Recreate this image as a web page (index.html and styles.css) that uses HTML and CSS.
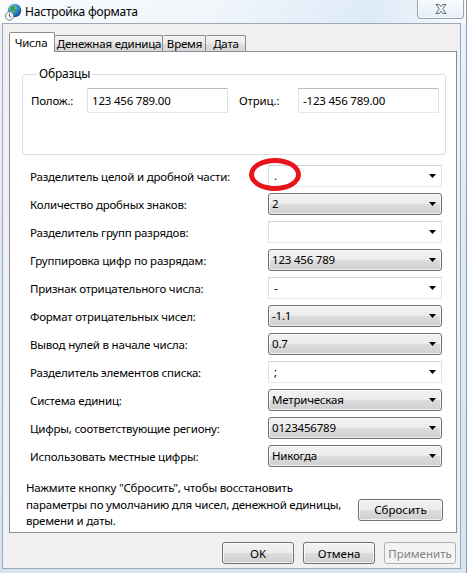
FILE: index.html
```html
<!DOCTYPE html>
<html lang="ru">
<head>
<meta charset="utf-8">
<title>Настройка формата</title>
<link rel="stylesheet" href="styles.css">
</head>
<body>
<div class="window">
  <div class="titlebar">
    <svg class="app-icon" width="18" height="18" viewBox="0 0 18 18">
      <defs>
        <radialGradient id="sea" cx="0.35" cy="0.3" r="0.75">
          <stop offset="0" stop-color="#a9dcff"/>
          <stop offset="0.55" stop-color="#2f86d6"/>
          <stop offset="1" stop-color="#0c4a96"/>
        </radialGradient>
      </defs>
      <circle cx="10.5" cy="7.5" r="6.8" fill="url(#sea)"/>
      <path d="M7 3.2c1.6-.9 3.4-.6 4.1.5.5.9-.6 1.4-.2 2.4.4 1 1.7.8 1.8 2 .1 1-1 1.6-1.9 1.3-1-.3-1.2-1.5-2.2-1.7-.9-.2-1.9.4-2.4-.3-.5-.8.6-1.5.2-2.4C6.2 4.5 6.1 3.7 7 3.2z" fill="#3aa33a"/>
      <path d="M13.6 3.4c1 .5 2 1.8 2.1 3-.6.2-1.3-.4-1.6-1.1-.3-.6-.9-1-.5-1.9z" fill="#3aa33a"/>
      <circle cx="5.5" cy="13" r="4.2" fill="#f4f4f4" stroke="#7b8189" stroke-width="1"/>
      <path d="M5.5 10.6v2.6l1.7 1" fill="none" stroke="#3c4048" stroke-width="0.9"/>
    </svg>
    <span class="title">Настройка формата</span>
    <button class="close" type="button" aria-label="Закрыть">
      <svg width="12" height="10" viewBox="0 0 12 10">
        <path d="M1 .5h3.2L6 2.7 7.8.5H11L7.7 4.8 11 9.5H7.8L6 7.1 4.2 9.5H1l3.3-4.7z" fill="#f6f7f9" stroke="#5f6a79" stroke-width="1" stroke-linejoin="round"/>
      </svg>
    </button>
  </div>

  <div class="client">
    <div class="tabs">
      <div class="tab active">Числа</div>
      <div class="tab tab-currency">Денежная единица</div>
      <div class="tab tab-time">Время</div>
      <div class="tab tab-date">Дата</div>
    </div>

    <div class="panel">
      <fieldset class="samples">
        <legend>Образцы</legend>
        <div class="sample-row">
          <span class="sample-label">Полож.:</span>
          <div class="field">123 456 789.00</div>
          <span class="sample-label neg">Отриц.:</span>
          <div class="field">-123 456 789.00</div>
        </div>
      </fieldset>

      <div class="settings">
        <span class="setting-label">Разделитель целой и дробной части:</span>
        <div class="combo edit"><span class="value">.</span><span class="mark"></span></div>

        <span class="setting-label">Количество дробных знаков:</span>
        <div class="combo list"><span class="value">2</span></div>

        <span class="setting-label">Разделитель групп разрядов:</span>
        <div class="combo edit"><span class="value"></span></div>

        <span class="setting-label">Группировка цифр по разрядам:</span>
        <div class="combo list"><span class="value">123 456 789</span></div>

        <span class="setting-label">Признак отрицательного числа:</span>
        <div class="combo edit"><span class="value">-</span></div>

        <span class="setting-label">Формат отрицательных чисел:</span>
        <div class="combo list"><span class="value">-1.1</span></div>

        <span class="setting-label">Вывод нулей в начале числа:</span>
        <div class="combo list"><span class="value">0.7</span></div>

        <span class="setting-label">Разделитель элементов списка:</span>
        <div class="combo edit"><span class="value">;</span></div>

        <span class="setting-label">Система единиц:</span>
        <div class="combo list"><span class="value">Метрическая</span></div>

        <span class="setting-label">Цифры, соответствующие региону:</span>
        <div class="combo list"><span class="value">0123456789</span></div>

        <span class="setting-label">Использовать местные цифры:</span>
        <div class="combo list"><span class="value">Никогда</span></div>
      </div>

      <div class="reset">
        <p class="reset-note">Нажмите кнопку "Сбросить", чтобы восстановить<br>параметры по умолчанию для чисел, денежной единицы,<br>времени и даты.</p>
        <button class="btn reset-btn" type="button">Сбросить</button>
      </div>
    </div>

    <div class="actions">
      <button class="btn" type="button">OK</button>
      <button class="btn" type="button">Отмена</button>
      <button class="btn" type="button" disabled>Применить</button>
    </div>
  </div>
</div>
</body>
</html>
```

FILE: styles.css
```css
* {
  box-sizing: border-box;
}

body {
  margin: 0;
  font-family: "Noto Sans", "Open Sans", sans-serif;
  font-size: 11.5px;
  letter-spacing: -0.2px;
  color: #000;
}

/* window frame */
.window {
  width: 467px;
  height: 573px;
  display: flex;
  flex-direction: column;
  padding-bottom: 4px;
  border-right: 1px solid #8b9bb0;
  background: linear-gradient(180deg, #eef4fa 0%, #e1eaf4 40%, #d9e4f0 100%);
}

.titlebar {
  height: 23px;
  flex: none;
  display: flex;
  align-items: flex-start;
  padding-left: 4px;
  background: linear-gradient(100deg, rgba(255,255,255,0.7) 0%, rgba(255,255,255,0.2) 45%, rgba(205,225,245,0.5) 80%, rgba(255,255,255,0.6) 100%);
}

.app-icon {
  margin-top: 3px;
  flex: none;
}

.title {
  margin-left: 3px;
  margin-top: 4px;
  font-size: 12px;
  line-height: 16px;
  color: #000;
}

.close {
  margin-left: auto;
  margin-right: 2px;
  width: 47px;
  height: 19px;
  padding: 0;
  display: flex;
  align-items: center;
  justify-content: center;
  border: 1px solid #96a3b3;
  border-top: none;
  border-radius: 0 0 4px 4px;
  background: linear-gradient(180deg, rgba(255,255,255,0.55), rgba(220,232,245,0.55));
  box-shadow: inset 0 0 0 1px rgba(255,255,255,0.6);
}

/* client area */
.client {
  flex: 1;
  margin: 0 5px 0 2px;
  border: 1px solid #9ba8b7;
  background: #f0f0f0;
  display: flex;
  flex-direction: column;
}

.tabs {
  height: 27px;
  flex: none;
  display: flex;
  align-items: flex-end;
  margin-left: 6px;
}

.tab {
  height: 16px;
  padding: 0 0 0 1px;
  line-height: 15px;
  text-align: center;
  border: 1px solid #898c95;
  border-bottom: none;
  border-left: none;
  border-radius: 2px 2px 0 0;
  background: linear-gradient(180deg, #f3f3f3 0%, #ebebeb 50%, #dedede 51%, #d6d6d6 100%);
  white-space: nowrap;
}

.tab.active {
  position: relative;
  z-index: 1;
  width: 46px;
  height: 20px;
  margin-bottom: -1px;
  padding: 0 2px 0 0;
  line-height: 20px;
  border-left: 1px solid #898c95;
  background: #fff;
}

.tab-currency {
  width: 108px;
}

.tab-time {
  width: 43px;
}

.tab-date {
  width: 40px;
}

.panel {
  flex: none;
  height: 482px;
  margin: 0 3px 0 6px;
  border: 1px solid #898c95;
  background: #fff;
  display: flex;
  flex-direction: column;
}

/* samples group box */
.samples {
  margin: 14px 10px 0 12px;
  padding: 6px 7px 41px 8px;
  border: 1px solid #d5dfe5;
  border-radius: 3px;
  min-width: 0;
}

.samples legend {
  margin-left: 6px;
  padding: 0 2px;
  line-height: 16px;
  font-size: 12px;
}

.sample-row {
  display: flex;
  align-items: center;
}

.sample-label {
  width: 56px;
  flex: none;
}

.sample-label.neg {
  width: 59px;
  margin-left: 11px;
}

.field {
  width: 141px;
  height: 25px;
  flex: none;
  padding-left: 4px;
  line-height: 23px;
  border: 1px solid #e2e3ea;
  border-top-color: #b9bcc2;
  border-bottom-color: #e3e9ef;
  background: #fff;
  white-space: nowrap;
}

/* settings list */
.settings {
  margin-top: 10px;
  padding: 0 14px 0 20px;
  display: grid;
  grid-template-columns: 1fr 174px;
  grid-auto-rows: 22px;
  row-gap: 6px;
  align-items: center;
}

.combo {
  position: relative;
  height: 22px;
  display: flex;
  align-items: center;
  white-space: nowrap;
}

.combo::after {
  content: "";
  width: 7px;
  height: 4px;
  margin-left: auto;
  flex: none;
  background: #000;
  clip-path: polygon(0 0, 100% 0, 50% 100%);
}

.combo.edit {
  padding: 0 5px 0 5px;
  border: 1px solid #e2e3ea;
  border-top-color: #cfd2d8;
  border-bottom-color: #e3e9ef;
  background: #fff;
}

.combo.list {
  padding: 0 5px 0 3px;
  border: 1px solid #707070;
  border-radius: 3px;
  background: linear-gradient(180deg, #f2f2f2 0%, #ebebeb 50%, #dddddd 50%, #cfcfcf 100%);
  box-shadow: inset 0 0 0 1px rgba(255,255,255,0.7);
}

.combo .value {
  line-height: 16px;
}

/* red hand-drawn ring round the decimal separator */
.mark {
  position: absolute;
  left: -20px;
  top: -8px;
  width: 52px;
  height: 33px;
  border: 5px solid #e8141c;
  border-radius: 50%;
}

/* reset section */
.reset {
  margin-top: 13px;
  padding: 0 13px 0 16px;
  display: flex;
  align-items: flex-end;
  justify-content: space-between;
}

.reset-note {
  margin: 0 0 2px;
  line-height: 16.5px;
  white-space: nowrap;
}

.btn {
  height: 22px;
  width: 72px;
  padding: 0;
  font: inherit;
  color: #000;
  border: 1px solid #707070;
  border-radius: 3px;
  background: linear-gradient(180deg, #f2f2f2 0%, #ebebeb 50%, #dddddd 50%, #cfcfcf 100%);
  box-shadow: inset 0 0 0 1px rgba(255,255,255,0.7);
}

.btn:disabled {
  color: #838383;
  border-color: #adb2b5;
  background: #f4f4f4;
  box-shadow: none;
}

.reset-btn {
  width: 85px;
  margin-bottom: 11px;
}

.actions {
  margin: 9px 4px 0 0;
  display: flex;
  justify-content: flex-end;
  gap: 9px;
}
```
